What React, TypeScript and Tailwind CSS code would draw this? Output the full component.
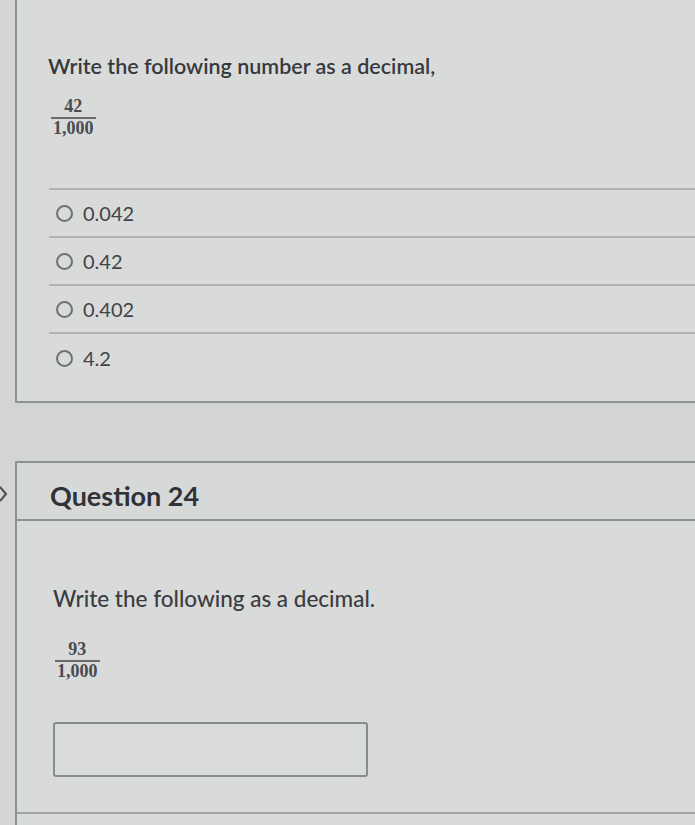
import React from "react";

const options = ["0.042", "0.42", "0.402", "4.2"];

function Fraction({ num, den }: { num: string; den: string }) {
  return (
    <div className="inline-flex flex-col items-center font-['Liberation_Serif',serif] text-[18px] font-bold leading-[17px] text-[#4a4c50]">
      <span className="px-[2px]">{num}</span>
      <span className="mt-[2px] h-[2px] w-full bg-[#6a6c70]" />
      <span className="px-[2px] pt-[1px]">{den}</span>
    </div>
  );
}

function Radio() {
  return <span className="block h-[17px] w-[17px] rounded-full border-2 border-[#6f7274]" />;
}

export default function App() {
  return (
    <div className="relative h-[825px] w-[695px] overflow-hidden bg-[#d3d5d4] font-['Lato','Open_Sans',sans-serif] text-[#37393e]">
      <div className="ml-[15px] flex flex-col">
        {/* question 23, top scrolled out of view */}
        <div className="h-[403px] border-b-2 border-l-2 border-[#8e9191] bg-[#d9dbda]">
          <div className="pl-[31px] pt-[53px]">
            <p className="text-[21.5px] font-semibold leading-[26px]">
              Write the following number as a decimal,
            </p>
            <div className="mt-[15px] pl-[3px]">
              <Fraction num="42" den="1,000" />
            </div>
          </div>
          <div className="ml-[32px] mt-[51px] border-t-2 border-[#b0b2b2]">
            {options.map((o, i) => (
              <div
                key={o}
                className={
                  "flex h-[48px] items-center gap-[10px] pl-[7px] " +
                  (i < options.length - 1 ? "border-b-2 border-[#b0b2b2]" : "")
                }
              >
                <Radio />
                <span className="text-[20px] leading-none text-[#414347]">{o}</span>
              </div>
            ))}
          </div>
        </div>

        {/* question 24 */}
        <div className="relative mt-[58px] border-l-2 border-t-2 border-[#8e9191] bg-[#d9dbda]">
          <svg
            className="absolute left-[-19px] top-[22px]"
            width="10"
            height="18"
            viewBox="0 0 10 18"
            fill="none"
            stroke="#4a4c50"
            strokeWidth="2"
          >
            <path d="M2 2l6 7-6 7" />
          </svg>
          <div className="flex h-[58px] items-end border-b-2 border-[#8e9191] bg-[#d7d9d8] pb-[10px] pl-[33px]">
            <h2 className="text-[27px] font-bold leading-none text-[#303237]">Question 24</h2>
          </div>
          <div className="pl-[36px] pt-[64px]">
            <p className="text-[22.5px] font-medium leading-[28px] text-[#3a3c41]">
              Write the following as a decimal.
            </p>
            <div className="mt-[24px] pl-[2px]">
              <Fraction num="93" den="1,000" />
            </div>
            <div className="mt-[42px] h-[55px] w-[315px] rounded-[3px] border-2 border-[#888b8d] bg-[#dadcdb]" />
          </div>
          <div className="mt-[35px] h-[2px] bg-[#a0a2a2]" />
          <div className="h-[20px]" />
        </div>
      </div>
    </div>
  );
}
